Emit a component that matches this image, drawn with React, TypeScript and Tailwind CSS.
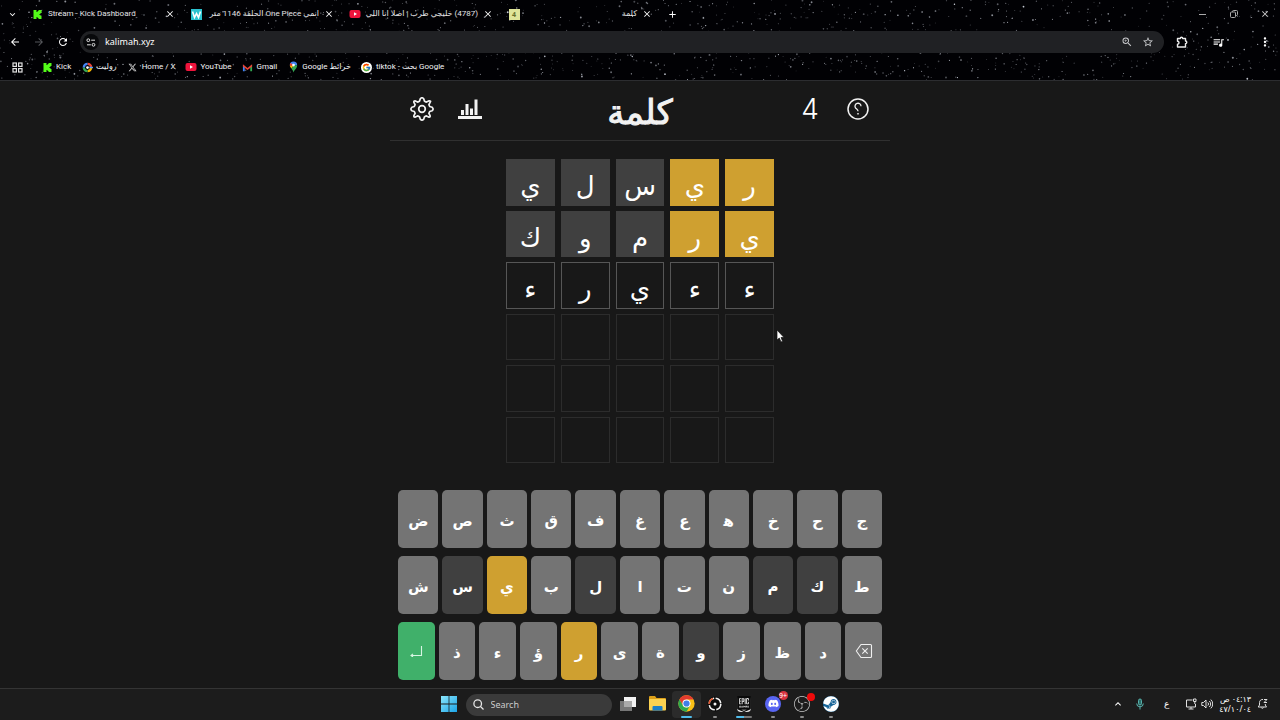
import type { ReactNode } from "react";
import { FaDiscord, FaSteam, FaXTwitter } from "react-icons/fa6";
import { FcGoogle } from "react-icons/fc";
import { SiEpicgames, SiKick, SiObsstudio } from "react-icons/si";
import {
  MdArrowBack,
  MdArrowForward,
  MdClose,
  MdExpandMore,
  MdExpandLess,
  MdMoreVert,
  MdQueueMusic,
  MdRefresh,
  MdStarBorder,
  MdZoomIn,
  MdAdd,
} from "react-icons/md";

const UI_FONT = "font-['Noto_Sans','DejaVu_Sans',sans-serif]";

/* Deterministic star field for the browser theme */
function makeStars(count: number) {
  let seed = 1234567;
  const rnd = () => {
    seed = (seed * 1103515245 + 12345) % 2147483648;
    return seed / 2147483648;
  };
  return Array.from({ length: count }, () => ({
    x: rnd() * 100,
    y: rnd() * 100,
    r: 0.45 + rnd() * rnd() * 0.6,
    o: 0.3 + rnd() * rnd() * 0.7,
  }));
}
const STARS = makeStars(1400);

function StarField() {
  return (
    <svg className="absolute inset-0 h-full w-full" aria-hidden="true">
      {STARS.map((s, i) => (
        <circle key={i} cx={`${s.x}%`} cy={`${s.y}%`} r={s.r} fill="#dfe4ee" opacity={s.o} />
      ))}
    </svg>
  );
}

function TabItem({ icon, title, rtl }: { icon: ReactNode; title: string; rtl?: boolean }) {
  return (
    <div className="flex w-[159px] items-center pr-[9px] pl-[7px]">
      <span className="flex w-3 shrink-0 justify-center">{icon}</span>
      <span
        dir={rtl ? "rtl" : "ltr"}
        className="mr-1.5 ml-[5px] min-w-0 flex-1 font-['Roboto','DejaVu_Sans',sans-serif] text-[8px] leading-4 whitespace-nowrap text-[#e4e4e6]"
      >
        {title}
      </span>
      <button aria-label="Close tab" className="flex w-2 shrink-0 justify-center text-[10px] text-white">
        <MdClose className="shrink-0" />
      </button>
    </div>
  );
}

function WIcon() {
  return (
    <svg width="11" height="11" viewBox="0 0 11 11">
      <rect width="11" height="11" fill="#2cc3d0" />
      <path d="M1.500 2.500 3.500 8.500 5.500 4.500 7.500 8.500 9.500 2.500" fill="none" stroke="#fff" strokeWidth="1.600" />
    </svg>
  );
}

function YoutubeIcon() {
  return (
    <svg width="12" height="12" viewBox="0 0 12 12">
      <rect x="0.500" y="2" width="11" height="8" rx="2" fill="#f0143c" />
      <path d="M5 4.300v3.400L8 6z" fill="#fff" />
    </svg>
  );
}

function RouletteIcon() {
  return (
    <svg width="11" height="11" viewBox="0 0 12 12" fill="none" strokeWidth="2.600">
      <path d="M6 2a4 4 0 0 1 4 4" stroke="#e94335" />
      <path d="M10 6a4 4 0 0 1-4 4" stroke="#f4b400" />
      <path d="M6 10a4 4 0 0 1-4-4" stroke="#36a853" />
      <path d="M2 6a4 4 0 0 1 4-4" stroke="#4285f4" />
      <circle cx="6" cy="6" r="1.500" fill="#fff" />
      <path d="M8 6h4" stroke="#4aa2ff" strokeWidth="1.500" />
    </svg>
  );
}

function GmailIcon() {
  return (
    <svg width="11" height="11" viewBox="0 0 12 12">
      <path d="M1 3v7h2V5z" fill="#4285f4" />
      <path d="M11 3v7H9V5z" fill="#34a853" />
      <path d="M1 2.500 6 6.500l5-4v2.300L6 8.700 1 4.800z" fill="#ea4335" />
    </svg>
  );
}

function MapsIcon() {
  return (
    <svg width="11" height="12" viewBox="0 0 12 13">
      <path d="M6 0.500A4 4 0 0 0 2 4.500h8A4 4 0 0 0 6 .5" fill="#4285f4" />
      <path d="M2 4.500C2 6 3 7 3.700 8L6.500 4.500z" fill="#fbbc04" />
      <path d="M10 4.500C10 8 7 9 6 12.500 5.600 10.500 4.600 9.300 3.700 8L6.500 4.500z" fill="#34a853" />
      <path d="M2.800 2A4 4 0 0 0 2 4.500l2 .8L5 3.500z" fill="#ea4335" />
      <circle cx="6" cy="4.400" r="1.500" fill="#fff" />
    </svg>
  );
}

function Bookmark({ icon, label, rtl }: { icon: ReactNode; label: string; rtl?: boolean }) {
  return (
    <a
      href="#"
      className="flex items-center gap-[3px] font-['Roboto','DejaVu_Sans',sans-serif] text-[8px] leading-4 whitespace-nowrap text-[#f4f4f6]"
    >
      <span className="flex w-3 justify-center">{icon}</span>
      <span dir={rtl ? "rtl" : "ltr"}>{label}</span>
    </a>
  );
}

function BrowserChrome() {
  return (
    <header className="relative h-20 shrink-0 overflow-hidden bg-[#010104] text-white">
      <StarField />
      <div className="relative flex h-full flex-col">
        <div className="flex h-7 items-center">
          <button aria-label="Search tabs" className="flex w-6 justify-center text-[11px]">
            <MdExpandMore />
          </button>
          <TabItem icon={<SiKick size={9} color="#53fc18" />} title="Stream - Kick Dashboard" />
          <TabItem icon={<WIcon />} title="انمي One Piece الحلقة 1146 متر" rtl />
          <TabItem icon={<YoutubeIcon />} title="(4787) خليجي طرب | اصلا انا اللي" rtl />
          <TabItem
            icon={
              <span className="flex h-[11px] w-[11px] items-center justify-center bg-[#dfe59a] text-[7px] leading-none font-bold text-[#68702c]">
                4
              </span>
            }
            title="كلمة"
            rtl
          />
          <button aria-label="New tab" className="flex w-6 justify-center text-[11px]">
            <MdAdd />
          </button>
          <div className="ml-auto flex text-[#d4d4d4]">
            <button aria-label="Minimize" className="flex w-[31px] items-center justify-center">
              <span className="h-px w-[7px] bg-[#aaaaaa]" />
            </button>
            <button aria-label="Restore" className="flex w-[31px] items-center justify-center">
              <svg width="8" height="8" viewBox="0 0 8 8" fill="none" stroke="#aaa">
                <rect x="0.500" y="2" width="5" height="5.500" rx="1" />
                <path d="M2.500 2V1.500a1 1 0 0 1 1-1h3a1 1 0 0 1 1 1v3a1 1 0 0 1-1 1h-.5" />
              </svg>
            </button>
            <button aria-label="Close window" className="flex w-[31px] justify-center text-[10px]">
              <MdClose />
            </button>
          </div>
        </div>

        <div className="flex h-7 items-center pl-[3px] text-[12px]">
          <button aria-label="Back" className="flex w-6 justify-center">
            <MdArrowBack />
          </button>
          <button aria-label="Forward" className="flex w-6 justify-center text-[#55565a]">
            <MdArrowForward />
          </button>
          <button aria-label="Reload" className="flex w-6 justify-center">
            <MdRefresh />
          </button>
          <div className="ml-[5px] flex h-[22px] flex-1 items-center rounded-full bg-[#202124] pr-2.5 pl-[3px] text-[#c8c9cc]">
            <span className="flex h-4 w-4 items-center justify-center rounded-full bg-[#08090b]">
              <svg width="10" height="9" viewBox="0 0 10 9" fill="none" stroke="#e3e3e3">
                <circle cx="2.300" cy="2.200" r="1.400" />
                <path d="M5.200 2.200H9M1 6.800h3.800" />
                <circle cx="7.500" cy="6.800" r="1.400" />
              </svg>
            </span>
            <input
              aria-label="Address"
              defaultValue="kalimah.xyz"
              className="ml-1.5 min-w-0 flex-1 bg-transparent text-[9px] leading-4 text-white outline-none"
            />
            <button aria-label="Zoom" className="mr-1 flex w-[22px] justify-center">
              <MdZoomIn />
            </button>
            <button aria-label="Bookmark this page" className="flex w-3 justify-center">
              <MdStarBorder className="shrink-0" />
            </button>
          </div>
          <button aria-label="Extensions" className="flex w-9 justify-center">
            <svg width="12" height="12" viewBox="0 0 12 12" fill="none" stroke="#ececec" strokeWidth="1.400" strokeLinejoin="round">
              <path d="M1.500 2.500H4.300a1.200 1.200 0 0 1 2.400 0H9.500V5a1.300 1.300 0 0 1 0 2.600V11h-8V8.300a1.500 1.500 0 0 0 0-3z" />
            </svg>
          </button>
          <button aria-label="Media" className="flex w-9 justify-center text-[13px]">
            <MdQueueMusic />
          </button>
          <button aria-label="Menu" className="ml-3.5 flex w-[30px] justify-center text-[14px]">
            <MdMoreVert />
          </button>
        </div>

        <nav className="flex h-[22px] items-center gap-2.5 pl-3">
          <button aria-label="Apps" className="mr-2">
            <svg width="11" height="11" viewBox="0 0 11 11" fill="none" stroke="#e3e3e3" strokeWidth="1.200">
              <rect x="1" y="1" width="3.400" height="3.400" />
              <rect x="6.600" y="1" width="3.400" height="3.400" />
              <rect x="1" y="6.600" width="3.400" height="3.400" />
              <rect x="6.600" y="6.600" width="3.400" height="3.400" />
            </svg>
          </button>
          <Bookmark icon={<SiKick size={9} color="#53fc18" />} label="Kick" />
          <Bookmark icon={<RouletteIcon />} label="روليت" rtl />
          <Bookmark icon={<FaXTwitter size={9} color="#c8c8c8" />} label="Home / X" />
          <Bookmark icon={<YoutubeIcon />} label="YouTube" />
          <Bookmark icon={<GmailIcon />} label="Gmail" />
          <Bookmark icon={<MapsIcon />} label="خرائط Google" rtl />
          <Bookmark
            icon={
              <span className="flex h-[11px] w-[11px] items-center justify-center rounded-full bg-white">
                <FcGoogle size={9} />
              </span>
            }
            label="tiktok - بحث Google"
          />
        </nav>
      </div>
    </header>
  );
}

type Mark = "present" | "absent" | "typed" | "empty";

const TILE_STYLE: Record<Mark, string> = {
  present: "bg-[#cfa030]",
  absent: "bg-[#404040]",
  typed: "border border-[#565656]",
  empty: "border border-[#2c2c2c]",
};

const GUESSES: [string, Mark][][] = [
  [["ر", "present"], ["ي", "present"], ["س", "absent"], ["ل", "absent"], ["ي", "absent"]],
  [["ي", "present"], ["ر", "present"], ["م", "absent"], ["و", "absent"], ["ك", "absent"]],
  [["ء", "typed"], ["ء", "typed"], ["ي", "typed"], ["ر", "typed"], ["ء", "typed"]],
];
const EMPTY_ROW: [string, Mark][] = Array.from({ length: 5 }, () => ["", "empty"]);
const BOARD = [...GUESSES, EMPTY_ROW, EMPTY_ROW, EMPTY_ROW];

const KEY_ROWS = [
  ["ج", "ح", "خ", "ه", "ع", "غ", "ف", "ق", "ث", "ص", "ض"],
  ["ط", "ك", "م", "ن", "ت", "ا", "ل", "ب", "ي", "س", "ش"],
  ["del", "د", "ظ", "ز", "و", "ة", "ى", "ر", "ؤ", "ء", "ذ", "enter"],
];
const PRESENT = ["ي", "ر"];
const ABSENT = ["س", "ل", "م", "ك", "و"];

function keyColor(k: string) {
  if (k === "enter") return "bg-[#40b06a]";
  if (PRESENT.includes(k)) return "bg-[#cfa030]";
  if (ABSENT.includes(k)) return "bg-[#404040]";
  return "bg-[#747474]";
}

function KeyFace({ k }: { k: string }) {
  if (k === "del")
    return (
      <svg width="18" height="16" viewBox="0 0 18 16" fill="none" stroke="#f0f0f0" strokeWidth="1.100">
        <path d="M6 1.500h9.500a1 1 0 0 1 1 1v11a1 1 0 0 1-1 1H6L1.300 8z" strokeLinejoin="round" />
        <path d="m7.300 5.300 5.400 5.400m0-5.400-5.400 5.400" />
      </svg>
    );
  if (k === "enter")
    return (
      <svg width="14" height="12" viewBox="0 0 14 12" fill="none" stroke="#d8f5e2" strokeWidth="1.100">
        <path d="M12.500 1v9.500H2M4 8.800 2 10.500l2 1.500" />
      </svg>
    );
  /* A zero-width joiner gives heh its looped initial form */
  return <span className="pt-1">{k === "ه" ? "ه\u200d" : k}</span>;
}

function Game() {
  return (
    <main
      dir="rtl"
      className="relative flex flex-1 flex-col items-center border-t border-[#2c2d30] bg-[#181818] font-['DejaVu_Sans',sans-serif] text-white"
    >
      <div className="flex h-[60px] w-full max-w-[500px] items-center gap-6 border-b border-[#303030] px-5 pb-1">
        <button aria-label="مساعدة" className="flex w-6 justify-center">
          <svg width="22" height="22" viewBox="0 0 22 22" fill="none" stroke="#f2f2f2" strokeWidth="1.500">
            <circle cx="11" cy="11" r="10" />
            <path d="M14 8.200a3 3 0 1 0-5.500 1.700c.7 1 2.500 1.300 2.500 3.300" strokeWidth="1.300" />
            <circle cx="11" cy="15.800" r="0.500" fill="#f2f2f2" strokeWidth="0.800" />
          </svg>
        </button>
        <span className="w-6 text-center font-['Inter',sans-serif] text-[28px] leading-8 font-light">4</span>
        <h1 className="flex-1 pt-1.5 text-center text-[34px] leading-10 font-normal text-[#f2f2f2] [-webkit-text-stroke:1px_#f2f2f2]">
          كلمة
        </h1>
        <button aria-label="إحصائيات" className="flex w-6 justify-center">
          <svg width="24" height="22" viewBox="0 0 24 22" fill="#f2f2f2">
            <path d="M0 18h24v3H0zM3 12h3v5H3zM7.500 6h3v11h-3zM12 10.500h3V17h-3zM16.500 1.500h3V17h-3z" />
          </svg>
        </button>
        <button aria-label="إعدادات" className="flex w-6 justify-center">
          <svg width="24" height="24" viewBox="0 0 24 24" fill="none" stroke="#f2f2f2" strokeWidth="1.700" strokeLinejoin="round">
            <path d="M10.300 1.800Q12-.3 13.700 1.800L14.500 4.300 16.400 5.100 18.700 3.900Q21.500 3.600 20.100 5.300L18.900 7.600 19.700 9.500 22.200 10.300Q24 12 22.200 13.700L19.700 14.500 18.900 16.400 20.100 18.700Q20.400 20.400 18.700 20.100L16.400 18.900 14.500 19.700 13.700 22.200Q12 24 10.300 22.200L9.500 19.700 7.600 18.900 5.300 20.100Q3.600 20.400 3.900 18.700L5.100 16.400 4.300 14.500 1.800 13.700Q0 12 1.800 10.300L4.300 9.500 5.100 7.600 3.900 5.300Q3.600 3.600 5.300 3.900L7.600 5.100 9.500 4.300z" />
            <circle cx="12" cy="12" r="3.300" />
          </svg>
        </button>
      </div>

      <div className="mt-[18px] grid h-[304px] w-[268px] grid-cols-5 grid-rows-6 gap-x-1.5 gap-y-[5px]">
        {BOARD.flatMap((row, r) =>
          row.map(([letter, mark], c) => (
            <div
              key={`${r}-${c}`}
              className={`flex items-center justify-center pt-2 text-[26px] leading-8 ${TILE_STYLE[mark]}`}
            >
              {letter}
            </div>
          )),
        )}
      </div>

      <div className="mt-auto flex w-full max-w-[500px] flex-col gap-2 px-2 pb-2">
        {KEY_ROWS.map((row, r) => (
          <div key={r} className="flex gap-1">
            {row.map((k) => (
              <button
                key={k}
                aria-label={k === "del" ? "حذف" : k === "enter" ? "إدخال" : k}
                className={`flex h-[58px] min-w-0 flex-1 items-center justify-center rounded-[5px] text-[15px] font-bold ${keyColor(k)}`}
              >
                <KeyFace k={k} />
              </button>
            ))}
          </div>
        ))}
      </div>
    </main>
  );
}

function ChromeIcon() {
  return (
    <svg width="17" height="17" viewBox="0 0 24 24">
      <circle cx="12" cy="12" r="11.500" fill="#fbc116" />
      <path d="M2 6.300A11.500 11.500 0 0 1 22 6.300H12L7 14.900z" fill="#e33b2e" />
      <path d="M2 6.300 7 14.900a5.800 5.800 0 0 0 10 0L12 23.500A11.500 11.500 0 0 1 2 6.300" fill="#2da94f" />
      <circle cx="12" cy="12" r="5.700" fill="#fff" />
      <circle cx="12" cy="12" r="4.400" fill="#3f7ee8" />
    </svg>
  );
}

function TaskIcon({ label, children, state }: { label: string; children: ReactNode; state?: "active" | "open" | "group" }) {
  return (
    <button
      aria-label={label}
      className={`relative flex h-[27px] w-[29px] items-center justify-center rounded pb-0.5 ${state === "active" ? "bg-[#2b2b2b]" : ""}`}
    >
      {children}
      {state === "active" && <span className="absolute bottom-0 h-0.5 w-[11px] rounded-full bg-[#50bdec]" />}
      {state === "group" && <span className="absolute bottom-0 h-0.5 w-4 rounded-full bg-linear-to-r from-[#50bdec] from-50% to-[#777777] to-50%" />}
      {state === "open" && <span className="absolute bottom-0 h-0.5 w-1 rounded-full bg-[#8c8c8c]" />}
    </button>
  );
}

function Taskbar() {
  return (
    <footer className="grid h-8 shrink-0 grid-cols-[1fr_auto_1fr] items-center border-t border-[#343434] bg-[#1c1c1c] text-white">
      <span />
      <div className="flex items-center">
        <TaskIcon label="Start">
          <svg width="16" height="16" viewBox="0 0 16 16">
            <defs>
              <linearGradient id="win" x2="1" y2="1">
                <stop stopColor="#8be6fb" />
                <stop offset="1" stopColor="#1ba4e8" />
              </linearGradient>
            </defs>
            <path d="M0 0h7.600v7.600H0zM8.400 0H16v7.600H8.400zM0 8.400h7.600V16H0zM8.400 8.400H16V16H8.400z" fill="url(#win)" />
          </svg>
        </TaskIcon>
        <label className="mx-0.5 flex h-[22px] w-[146px] items-center gap-[7px] rounded-full bg-[#3a3a3a] px-[7px]">
          <svg width="11" height="11" viewBox="0 0 11 11" fill="none" stroke="#e8e8e8" strokeWidth="1.300">
            <circle cx="4.700" cy="4.700" r="3.800" />
            <path d="m7.500 7.500 3 3" />
          </svg>
          <input
            aria-label="Search"
            placeholder="Search"
            className="min-w-0 flex-1 bg-transparent text-[9px] leading-4 outline-none placeholder:text-[#cccccc]"
          />
        </label>
        <TaskIcon label="Task view">
          <svg width="18" height="16" viewBox="0 0 18 16">
            <rect x="5" y="1" width="12" height="10" fill="#f2f2f2" />
            <rect x="1" y="5" width="12" height="10" fill="#777" />
            <rect x="5" y="5" width="8" height="6" fill="#aaa" />
          </svg>
        </TaskIcon>
        <TaskIcon label="File Explorer">
          <svg width="17" height="15" viewBox="0 0 17 15">
            <path d="M0 1a1 1 0 0 1 1-1h5l1.500 2H16a1 1 0 0 1 1 1v3H0z" fill="#dca019" />
            <rect y="3" width="17" height="11.500" rx="1" fill="#fbd252" />
            <path d="M3.500 11a1 1 0 0 1 1-1h8a1 1 0 0 1 1 1v3.500h-10z" fill="#1b7fc9" />
          </svg>
        </TaskIcon>
        <TaskIcon label="Chrome" state="active">
          <ChromeIcon />
        </TaskIcon>
        <TaskIcon label="Recorder" state="open">
          <svg width="16" height="16" viewBox="0 0 16 16" fill="none">
            <circle cx="8" cy="8" r="7.500" fill="#0c0c0c" />
            <circle cx="8" cy="8" r="5.800" stroke="#f3f3f3" strokeWidth="1.600" strokeDasharray="7.500 1.600" />
            <path d="M2.200 8A5.800 5.800 0 0 1 6 2.600" stroke="#e4572e" strokeWidth="1.600" />
            <circle cx="8" cy="8" r="1.500" fill="#f3f3f3" />
          </svg>
        </TaskIcon>
        <TaskIcon label="Epic Games" state="group">
          <span className="flex h-4 w-[14px] items-center justify-center rounded-sm bg-[#e2e2e2]">
            <SiEpicgames size={16} color="#0a0a0a" className="shrink-0" />
          </span>
        </TaskIcon>
        <TaskIcon label="Discord" state="open">
          <span className="flex h-4 w-4 items-center justify-center rounded-full bg-[#5865f2]">
            <FaDiscord size={11} />
          </span>
          <span className="absolute top-0 right-0 flex h-[9px] w-[9px] items-center justify-center rounded-full bg-[#d8323f] text-[7px] leading-none">
            9+
          </span>
        </TaskIcon>
        <TaskIcon label="OBS Studio" state="open">
          <SiObsstudio size={16} color="#c9c9c9" />
          <span className="absolute top-0.5 right-0.5 h-2 w-2 rounded-full bg-[#f00b0b]" />
        </TaskIcon>
        <TaskIcon label="Steam" state="open">
          <span className="flex h-4 w-4 items-center justify-center rounded-full bg-[#176599]">
            <FaSteam size={16} />
          </span>
        </TaskIcon>
      </div>

      <div className="flex items-center justify-end pr-3 pb-0.5">
        <button aria-label="Show hidden icons" className="mr-3 text-[12px]">
          <MdExpandLess />
        </button>
        <svg className="mr-5" width="8" height="12" viewBox="0 0 8 12" fill="none" stroke="#58b3ad">
          <rect x="2.500" y="1" width="3" height="6" rx="1.500" fill="#2c6d6a" />
          <path d="M.7 5.500a3.300 3.300 0 0 0 6.600 0M4 9v2.500" />
        </svg>
        <span className="mr-4 text-[9px] leading-4">ع</span>
        <button aria-label="Network and volume" className="mr-1.5 flex items-center gap-1">
          <svg width="12" height="12" viewBox="0 0 12 12" fill="none" stroke="#e0e0e0">
            <path d="M7.500 2h-6v7h9V6M3.500 11h5M6 9v2" />
            <path d="M8.500 1h2.500v2.500H8.500zM9.800 3.500V6" />
          </svg>
          <svg width="12" height="12" viewBox="0 0 12 12" fill="none" stroke="#e0e0e0">
            <path d="M.8 4.500h1.700L5 2v8L2.500 7.500H.8zM6.800 4.500a2 2 0 0 1 0 3M8.300 3a4 4 0 0 1 0 6M9.800 1.600a6 6 0 0 1 0 8.800" />
          </svg>
        </button>
        <div className="mr-1.5 flex flex-col items-end text-[8px] leading-[10px] whitespace-nowrap">
          <span dir="rtl">٠٤:١٣ ص</span>
          <span>٤٧/١٠/٠٤</span>
        </div>
        <svg width="11" height="12" viewBox="0 0 11 12" fill="none" stroke="#e0e0e0">
          <path d="M6 1.500a3 3 0 0 0-3.500 3V7L1.200 9h8.300L8.300 7V6M4.200 9.500a1.300 1.300 0 0 0 2.400 0M7 1.500h3L7 4.500h3" />
        </svg>
      </div>
    </footer>
  );
}

export default function App() {
  return (
    <div className={`relative flex min-h-screen flex-col bg-[#181818] ${UI_FONT}`}>
      <BrowserChrome />
      <Game />
      <Taskbar />
      <svg className="pointer-events-none absolute top-[329px] left-[776px]" width="9" height="14" viewBox="0 0 9 14" aria-hidden="true">
        <path d="M1 1v10l2.300-2 1.700 4 1.600-.7L5 8.500h3z" fill="#fff" stroke="#111" strokeWidth="0.700" />
      </svg>
    </div>
  );
}
